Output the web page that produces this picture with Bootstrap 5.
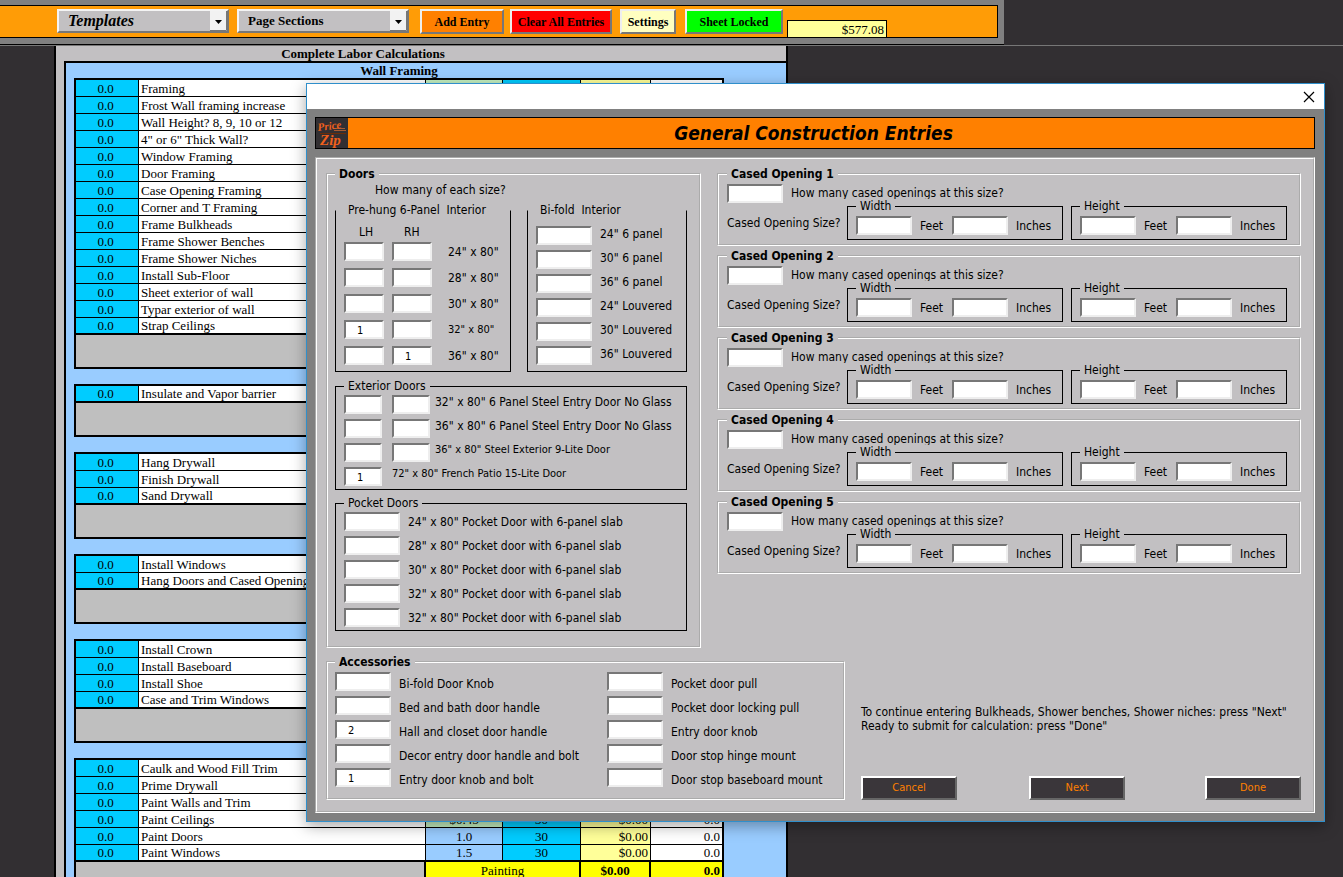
<!DOCTYPE html>
<html lang="en">
<head>
<meta charset="utf-8">
<meta name="viewport" content="width=device-width, initial-scale=1">
<title>General Construction Entries</title>
<link href="https://cdn.jsdelivr.net/npm/bootstrap@5.3.0/dist/css/bootstrap.min.css" rel="stylesheet">
<style>
  :root { --ink:#000; --panel:#c2c0c2; --frame:#808080; --orange:#ff8000; --cyan:#00ccff; --sky:#99ccff; --butter:#ffff99; }
  body { background:#322f32; color:var(--ink); font:13px/16px "Liberation Serif", serif; height:100vh; overflow:hidden; position:relative; }

  /* toolbar */
  .ribbon { width:75%; min-width:1004px; max-width:1004px; background:var(--frame); border-bottom:1px solid #000; padding:5px 6px 6px 0; }
  .ribbon-line { border-bottom:1px solid #777; }
  .ribbon-in { background:#ff9c06; border:1px solid #000; border-left:0; height:33px; padding-left:57px; }
  .pick { position:relative; width:172px; height:24px; margin:3px 8px 0 0; }
  .pick select { appearance:none; width:100%; height:100%; background:var(--panel); border:2px solid; border-color:#f4f4f4 #777 #777 #f4f4f4; border-radius:0; padding:0 9px; font:bold 13px/18px "Liberation Serif", serif; color:#000; }
  .pick select.big { font-size:16px; font-style:italic; }
  .pick svg { position:absolute; right:2px; top:2px; pointer-events:none; }
  .tool { height:25px; margin-top:3px; border:2px solid; border-color:#eee #777 #777 #eee; border-radius:0; padding:0; font:bold 12px/22px "Liberation Serif", serif; color:#000; white-space:nowrap; }
  .tool-add { width:84px; margin-left:3px; background:#ff8000; }
  .tool-clear { width:102px; margin-left:6px; background:#f00; }
  .tool-set { width:56px; margin-left:8px; background:#ffffc0; }
  .tool-lock { width:98px; margin-left:9px; background:#0f0; }
  .total { width:100px; height:17px; border:1px solid #000; border-bottom:0; background:var(--butter); text-align:right; padding-right:2px; line-height:17px; }

  /* worksheet */
  .sheet { width:734px; margin-left:54px; background:var(--panel); border:solid #000; border-width:0 2px; padding-left:8px; height:calc(100vh - 46px); overflow:hidden; }
  .sheet-title { height:15px; line-height:16px; padding-right:124px; font-weight:bold; text-align:center; }
  .sheet-in { background:var(--sky); border:solid #000; border-width:2px 0 0 2px; padding:0 62px 0 8px; height:100%; overflow:hidden; }
  .sheet-in h2 { font:bold 13px/15px "Liberation Serif", serif; text-align:center; margin:0; height:15px; }
  .calc { width:100%; table-layout:fixed; border-collapse:separate; border-spacing:0; border:2px solid #000; border-bottom:0; margin-bottom:15px; }
  .calc col:nth-child(1) { width:63px; }
  .calc col:nth-child(2) { width:287px; }
  .calc col:nth-child(3) { width:77px; }
  .calc col:nth-child(4) { width:78px; }
  .calc col:nth-child(5) { width:70px; }
  .calc td { height:17px; padding:2px 2px 0; line-height:14px; border:0 solid #000; border-width:0 1px 1px 0; white-space:nowrap; overflow:hidden; background:#fff; }
  .calc td:last-child { border-right:0; text-align:right; }
  .calc td:nth-child(1) { background:var(--cyan); text-align:center; padding-right:5px; }
  .calc td:nth-child(3) { background:#c4efc0; text-align:center; }
  .calc td.rate { background:var(--sky); }
  .calc td:nth-child(4) { background:var(--cyan); text-align:center; }
  .calc td:nth-child(5) { background:var(--butter); text-align:right; }
  .calc tbody tr:last-child td { border-bottom-width:2px; padding-top:1px; }
  .calc tfoot td:nth-child(n) { height:34px; background:#ff0; border-bottom-width:2px; border-right-width:2px; text-align:center; vertical-align:top; font-weight:bold; }
  .calc tfoot td:nth-child(1) { background:#bfbfbf; }
  .calc tfoot td:nth-child(2) { font-weight:normal; }
  .calc tfoot td:last-child { border-right:0; text-align:right; }

  /* dialog */
  .dlg { position:absolute; left:306px; right:18px; top:83px; background:var(--frame); border:1px solid #2f8fcb; box-shadow:0 4px 14px rgba(0,0,0,.35); font:12px/14px "DejaVu Sans Condensed", "DejaVu Sans", sans-serif; white-space:nowrap; }
  .dlg-top { background:#fff; height:25px; }
  .dlg-top button { background:none; border:0; padding:0 9px; line-height:0; }
  .dlg-body { padding:8px 9px 8px 8px; }
  .dlg-head { background:var(--orange); border:1px solid #000; height:32px; margin-bottom:8px; }
  .dlg-head h1 { font:italic bold 19px/31px "DejaVu Sans Condensed", "DejaVu Sans", sans-serif; margin:0; padding-right:35px; text-align:center; }
  .face { background:var(--panel); border:2px groove #fff; padding:8px 12px 11px 9px; }
  .dlg fieldset { border:1px solid #000; padding:2px 8px 3px; }
  .dlg fieldset.etched { border:2px groove #fff; }
  .dlg legend { float:none; width:auto; margin:0; padding:0 4px; font:inherit; height:14px; line-height:14px; white-space:pre; }
  .dlg .etched > legend { font-weight:bold; }
  .dlg fieldset.open-top { border-top-color:transparent; }
  .dlg .doors { width:375px; padding:0 12px 15px 7px; }
  .ask { margin:1px 0 4px 40px; line-height:17px; }
  .dlg .prehung { width:176px; padding:8px 8px 6px; }
  .dlg .bifold { width:160px; padding:9px 8px 6px; }
  .bifold label { padding-bottom:3px; }
  .dlg .exterior { margin-top:7px; }
  .exterior label { align-self:flex-start; }
  .dlg .pocket { margin-top:6px; }
  .hand { height:14px; margin-bottom:3px; padding-left:15px; }
  .hand span { width:45px; }
  .rows5 { display:flex; flex-direction:column; gap:5px; }
  .rows7 { display:flex; flex-direction:column; gap:7px; }
  .dlg input { width:56px; height:19px; flex:none; background:#fff; border:2px solid; border-color:#777 #eee #eee #777; border-radius:0; padding:2px 0 0 11px; font:11px/13px "DejaVu Sans Condensed", sans-serif; color:#000; margin-right:8px; }
  .dlg input:focus { outline:0; }
  .dlg input.w40 { width:40px; }
  .dlg input.w37 { width:38px; margin-right:10px; }
  .dlg input.w37 + label { margin-left:-5px; }
  .dlg input.w37 + label.far { margin-left:0; }
  .dlg input.w40 + label { margin-left:8px; }
  .fine { font-size:11px; }
  .dlg .acc { width:519px; padding:3px 7px 11px; }
  .acc label { padding-top:5px; }
  .acc-col { width:272px; }
  .dlg .cased { padding:3px 12px 4px 8px; }
  .cased-list { row-gap:3px; }
  .count { height:15px; }
  .count label { height:15px; line-height:19px; overflow:hidden; }
  .ask-size { width:120px; padding-top:6px; }
  .dlg .cased fieldset { padding:3px 0 4px 8px; flex:1 1 0; }
  .feet { width:32px; }
  .lower { margin-top:7px; }
  .note { margin-bottom:43px; }
  .act { width:96px; height:24px; border:2px solid; border-color:#fff #666 #666 #fff; border-radius:0; background:#3a363a; color:var(--orange); font:11px/20px "DejaVu Sans Condensed", sans-serif; padding:0; }
  .act-next { margin-left:72px; }
</style>
</head>
<body>
<header class="ribbon-line">
  <div class="ribbon">
    <div class="ribbon-in d-flex align-items-start">
      <div class="pick"><select class="big" aria-label="Templates"><option>Templates</option></select>
        <svg width="17" height="20"><path d="M0 0h17v20H0z" fill="#f2f2f2"/><path d="M16.500 0v19.500H0" fill="none" stroke="#777"/><path d="M5 9h7l-3.500 4z"/></svg></div>
      <div class="pick"><select aria-label="Page Sections"><option>Page Sections</option></select>
        <svg width="17" height="20"><path d="M0 0h17v20H0z" fill="#f2f2f2"/><path d="M16.500 0v19.500H0" fill="none" stroke="#777"/><path d="M5 9h7l-3.500 4z"/></svg></div>
      <button type="button" class="tool tool-add">Add Entry</button>
      <button type="button" class="tool tool-clear">Clear All Entries</button>
      <button type="button" class="tool tool-set">Settings</button>
      <button type="button" class="tool tool-lock">Sheet Locked</button>
      <output class="total align-self-end ms-1">$577.08</output>
    </div>
  </div>
</header>

<main class="sheet">
  <div class="sheet-title">Complete Labor Calculations</div>
  <div class="sheet-in">
    <h2>Wall Framing</h2>
    <table class="calc">
      <colgroup><col><col><col><col><col><col></colgroup>
      <tbody>
      <tr><td>0.0</td><td>Framing</td><td></td><td></td><td></td><td></td></tr>
      <tr><td>0.0</td><td>Frost Wall framing increase</td><td></td><td></td><td></td><td></td></tr>
      <tr><td>0.0</td><td>Wall Height? 8, 9, 10 or 12</td><td></td><td></td><td></td><td></td></tr>
      <tr><td>0.0</td><td>4" or 6" Thick Wall?</td><td></td><td></td><td></td><td></td></tr>
      <tr><td>0.0</td><td>Window Framing</td><td></td><td></td><td></td><td></td></tr>
      <tr><td>0.0</td><td>Door Framing</td><td></td><td></td><td></td><td></td></tr>
      <tr><td>0.0</td><td>Case Opening Framing</td><td></td><td></td><td></td><td></td></tr>
      <tr><td>0.0</td><td>Corner and T Framing</td><td></td><td></td><td></td><td></td></tr>
      <tr><td>0.0</td><td>Frame Bulkheads</td><td></td><td></td><td></td><td></td></tr>
      <tr><td>0.0</td><td>Frame Shower Benches</td><td></td><td></td><td></td><td></td></tr>
      <tr><td>0.0</td><td>Frame Shower Niches</td><td></td><td></td><td></td><td></td></tr>
      <tr><td>0.0</td><td>Install Sub-Floor</td><td></td><td></td><td></td><td></td></tr>
      <tr><td>0.0</td><td>Sheet exterior of wall</td><td></td><td></td><td></td><td></td></tr>
      <tr><td>0.0</td><td>Typar exterior of wall</td><td></td><td></td><td></td><td></td></tr>
      <tr><td>0.0</td><td>Strap Ceilings</td><td></td><td></td><td></td><td></td></tr>
      </tbody>
      <tfoot><tr><td colspan="2"></td><td colspan="2"></td><td></td><td></td></tr></tfoot>
    </table>
    <table class="calc">
      <colgroup><col><col><col><col><col><col></colgroup>
      <tbody><tr><td>0.0</td><td>Insulate and Vapor barrier</td><td></td><td></td><td></td><td></td></tr></tbody>
      <tfoot><tr><td colspan="2"></td><td colspan="2"></td><td></td><td></td></tr></tfoot>
    </table>
    <table class="calc">
      <colgroup><col><col><col><col><col><col></colgroup>
      <tbody>
      <tr><td>0.0</td><td>Hang Drywall</td><td></td><td></td><td></td><td></td></tr>
      <tr><td>0.0</td><td>Finish Drywall</td><td></td><td></td><td></td><td></td></tr>
      <tr><td>0.0</td><td>Sand Drywall</td><td></td><td></td><td></td><td></td></tr>
      </tbody>
      <tfoot><tr><td colspan="2"></td><td colspan="2"></td><td></td><td></td></tr></tfoot>
    </table>
    <table class="calc">
      <colgroup><col><col><col><col><col><col></colgroup>
      <tbody>
      <tr><td>0.0</td><td>Install Windows</td><td></td><td></td><td></td><td></td></tr>
      <tr><td>0.0</td><td>Hang Doors and Cased Openings</td><td></td><td></td><td></td><td></td></tr>
      </tbody>
      <tfoot><tr><td colspan="2"></td><td colspan="2"></td><td></td><td></td></tr></tfoot>
    </table>
    <table class="calc">
      <colgroup><col><col><col><col><col><col></colgroup>
      <tbody>
      <tr><td>0.0</td><td>Install Crown</td><td></td><td></td><td></td><td></td></tr>
      <tr><td>0.0</td><td>Install Baseboard</td><td></td><td></td><td></td><td></td></tr>
      <tr><td>0.0</td><td>Install Shoe</td><td></td><td></td><td></td><td></td></tr>
      <tr><td>0.0</td><td>Case and Trim Windows</td><td></td><td></td><td></td><td></td></tr>
      </tbody>
      <tfoot><tr><td colspan="2"></td><td colspan="2"></td><td></td><td></td></tr></tfoot>
    </table>
    <table class="calc">
      <colgroup><col><col><col><col><col><col></colgroup>
      <tbody>
      <tr><td>0.0</td><td>Caulk and Wood Fill Trim</td><td></td><td></td><td></td><td></td></tr>
      <tr><td>0.0</td><td>Prime Drywall</td><td></td><td></td><td></td><td></td></tr>
      <tr><td>0.0</td><td>Paint Walls and Trim</td><td></td><td></td><td></td><td></td></tr>
      <tr><td>0.0</td><td>Paint Ceilings</td><td>$0.45</td><td>30</td><td>$0.00</td><td>0.0</td></tr>
      <tr><td>0.0</td><td>Paint Doors</td><td class="rate">1.0</td><td>30</td><td>$0.00</td><td>0.0</td></tr>
      <tr><td>0.0</td><td>Paint Windows</td><td class="rate">1.5</td><td>30</td><td>$0.00</td><td>0.0</td></tr>
      </tbody>
      <tfoot><tr><td colspan="2"></td><td colspan="2">Painting</td><td>$0.00</td><td>0.0</td></tr></tfoot>
    </table>
  </div>
</main>

<section class="dlg" role="dialog" aria-labelledby="dlgTitle">
  <div class="dlg-top d-flex justify-content-end align-items-center">
    <button type="button" aria-label="Close"><svg width="12" height="12" stroke="#000" stroke-width="1.200"><path d="M1 1l10 10M11 1L1 11"/></svg></button>
  </div>
  <div class="dlg-body">
    <div class="dlg-head d-flex">
      <svg width="32" height="30" role="img" aria-label="Price Zip"><path d="M0 0h32v30H0z" fill="#322f32"/>
        <path d="M17 10.500h12M18 12.500h12" stroke="#a85c34"/><path d="M4 15.500h26" stroke="#6a2c08"/>
        <g fill="#f0601c" font-family="Liberation Serif, serif" font-style="italic" font-weight="bold"><text x="2" y="13" font-size="11" transform="rotate(-7 2 13)">Price</text><text x="4" y="27" font-size="15">Zip</text></g></svg>
      <h1 id="dlgTitle" class="flex-fill">General Construction Entries</h1>
    </div>
    <form class="face">
      <div class="d-flex gap-3 align-items-start">
        <fieldset class="etched doors"><legend>Doors</legend>
          <p class="ask">How many of each size?</p>
          <div class="d-flex gap-3">
            <fieldset class="open-top prehung"><legend>Pre-hung 6-Panel  Interior</legend>
              <div class="hand d-flex"><span>LH</span><span>RH</span></div>
              <div class="rows7">
                <div class="d-flex align-items-center"><input class="w40" aria-label="LH 24"><input class="w40" id="p24"><label for="p24">24" x 80"</label></div>
                <div class="d-flex align-items-center"><input class="w40" aria-label="LH 28"><input class="w40" id="p28"><label for="p28">28" x 80"</label></div>
                <div class="d-flex align-items-center"><input class="w40" aria-label="LH 30"><input class="w40" id="p30"><label for="p30">30" x 80"</label></div>
                <div class="d-flex align-items-center"><input class="w40" aria-label="LH 32" value="1"><input class="w40" id="p32"><label class="fine" for="p32">32" x 80"</label></div>
                <div class="d-flex align-items-center"><input class="w40" aria-label="LH 36"><input class="w40" id="p36" value="1"><label for="p36">36" x 80"</label></div>
              </div>
            </fieldset>
            <fieldset class="open-top bifold"><legend>Bi-fold  Interior</legend>
              <div class="rows5">
                <div class="d-flex align-items-center"><input id="b1"><label for="b1">24" 6 panel</label></div>
                <div class="d-flex align-items-center"><input id="b2"><label for="b2">30" 6 panel</label></div>
                <div class="d-flex align-items-center"><input id="b3"><label for="b3">36" 6 panel</label></div>
                <div class="d-flex align-items-center"><input id="b4"><label for="b4">24" Louvered</label></div>
                <div class="d-flex align-items-center"><input id="b5"><label for="b5">30" Louvered</label></div>
                <div class="d-flex align-items-center"><input id="b6"><label for="b6">36" Louvered</label></div>
              </div>
            </fieldset>
          </div>
          <fieldset class="exterior"><legend>Exterior Doors</legend>
            <div class="rows5">
              <div class="d-flex align-items-center"><input class="w37" aria-label="LH 32 steel"><input class="w37" id="e1"><label for="e1">32" x 80" 6 Panel Steel Entry Door No Glass</label></div>
              <div class="d-flex align-items-center"><input class="w37" aria-label="LH 36 steel"><input class="w37" id="e2"><label for="e2">36" x 80" 6 Panel Steel Entry Door No Glass</label></div>
              <div class="d-flex align-items-center"><input class="w37" aria-label="LH 9-Lite"><input class="w37" id="e3"><label class="fine" for="e3">36" x 80" Steel Exterior 9-Lite Door</label></div>
              <div class="d-flex align-items-center"><input class="w37" id="e4" value="1"><label class="fine far" for="e4">72" x 80" French Patio 15-Lite Door</label></div>
            </div>
          </fieldset>
          <fieldset class="pocket"><legend>Pocket Doors</legend>
            <div class="rows5">
              <div class="d-flex align-items-center"><input id="k1"><label for="k1">24" x 80" Pocket Door with 6-panel slab</label></div>
              <div class="d-flex align-items-center"><input id="k2"><label for="k2">28" x 80" Pocket door with 6-panel slab</label></div>
              <div class="d-flex align-items-center"><input id="k3"><label for="k3">30" x 80" Pocket door with 6-panel slab</label></div>
              <div class="d-flex align-items-center"><input id="k4"><label for="k4">32" x 80" Pocket door with 6-panel slab</label></div>
              <div class="d-flex align-items-center"><input id="k5"><label for="k5">32" x 80" Pocket door with 6-panel slab</label></div>
            </div>
          </fieldset>
        </fieldset>

        <div class="cased-list flex-fill d-grid">
          <fieldset class="etched cased"><legend>Cased Opening 1</legend>
            <div class="count d-flex align-items-start"><input id="c1"><label for="c1">How many cased openings at this size?</label></div>
            <div class="d-flex align-items-center"><span class="ask-size">Cased Opening Size?</span>
              <fieldset><legend>Width</legend><div class="d-flex align-items-center"><input id="w1f"><label class="feet" for="w1f">Feet</label><input id="w1i"><label for="w1i">Inches</label></div></fieldset>
              <fieldset class="ms-2"><legend>Height</legend><div class="d-flex align-items-center"><input id="h1f"><label class="feet" for="h1f">Feet</label><input id="h1i"><label for="h1i">Inches</label></div></fieldset>
            </div>
          </fieldset>
          <fieldset class="etched cased"><legend>Cased Opening 2</legend>
            <div class="count d-flex align-items-start"><input id="c2"><label for="c2">How many cased openings at this size?</label></div>
            <div class="d-flex align-items-center"><span class="ask-size">Cased Opening Size?</span>
              <fieldset><legend>Width</legend><div class="d-flex align-items-center"><input id="w2f"><label class="feet" for="w2f">Feet</label><input id="w2i"><label for="w2i">Inches</label></div></fieldset>
              <fieldset class="ms-2"><legend>Height</legend><div class="d-flex align-items-center"><input id="h2f"><label class="feet" for="h2f">Feet</label><input id="h2i"><label for="h2i">Inches</label></div></fieldset>
            </div>
          </fieldset>
          <fieldset class="etched cased"><legend>Cased Opening 3</legend>
            <div class="count d-flex align-items-start"><input id="c3"><label for="c3">How many cased openings at this size?</label></div>
            <div class="d-flex align-items-center"><span class="ask-size">Cased Opening Size?</span>
              <fieldset><legend>Width</legend><div class="d-flex align-items-center"><input id="w3f"><label class="feet" for="w3f">Feet</label><input id="w3i"><label for="w3i">Inches</label></div></fieldset>
              <fieldset class="ms-2"><legend>Height</legend><div class="d-flex align-items-center"><input id="h3f"><label class="feet" for="h3f">Feet</label><input id="h3i"><label for="h3i">Inches</label></div></fieldset>
            </div>
          </fieldset>
          <fieldset class="etched cased"><legend>Cased Opening 4</legend>
            <div class="count d-flex align-items-start"><input id="c4"><label for="c4">How many cased openings at this size?</label></div>
            <div class="d-flex align-items-center"><span class="ask-size">Cased Opening Size?</span>
              <fieldset><legend>Width</legend><div class="d-flex align-items-center"><input id="w4f"><label class="feet" for="w4f">Feet</label><input id="w4i"><label for="w4i">Inches</label></div></fieldset>
              <fieldset class="ms-2"><legend>Height</legend><div class="d-flex align-items-center"><input id="h4f"><label class="feet" for="h4f">Feet</label><input id="h4i"><label for="h4i">Inches</label></div></fieldset>
            </div>
          </fieldset>
          <fieldset class="etched cased"><legend>Cased Opening 5</legend>
            <div class="count d-flex align-items-start"><input id="c5"><label for="c5">How many cased openings at this size?</label></div>
            <div class="d-flex align-items-center"><span class="ask-size">Cased Opening Size?</span>
              <fieldset><legend>Width</legend><div class="d-flex align-items-center"><input id="w5f"><label class="feet" for="w5f">Feet</label><input id="w5i"><label for="w5i">Inches</label></div></fieldset>
              <fieldset class="ms-2"><legend>Height</legend><div class="d-flex align-items-center"><input id="h5f"><label class="feet" for="h5f">Feet</label><input id="h5i"><label for="h5i">Inches</label></div></fieldset>
            </div>
          </fieldset>
        </div>
      </div>

      <div class="lower d-flex gap-3">
        <fieldset class="etched acc"><legend>Accessories</legend>
          <div class="d-flex">
            <div class="acc-col rows5">
              <div class="d-flex align-items-center"><input id="a1"><label for="a1">Bi-fold Door Knob</label></div>
              <div class="d-flex align-items-center"><input id="a2"><label for="a2">Bed and bath door handle</label></div>
              <div class="d-flex align-items-center"><input id="a3" value="2"><label for="a3">Hall and closet door handle</label></div>
              <div class="d-flex align-items-center"><input id="a4"><label for="a4">Decor entry door handle and bolt</label></div>
              <div class="d-flex align-items-center"><input id="a5" value="1" autofocus><label for="a5">Entry door knob and bolt</label></div>
            </div>
            <div class="rows5">
              <div class="d-flex align-items-center"><input id="a6"><label for="a6">Pocket door pull</label></div>
              <div class="d-flex align-items-center"><input id="a7"><label for="a7">Pocket door locking pull</label></div>
              <div class="d-flex align-items-center"><input id="a8"><label for="a8">Entry door knob</label></div>
              <div class="d-flex align-items-center"><input id="a9"><label for="a9">Door stop hinge mount</label></div>
              <div class="d-flex align-items-center"><input id="a10"><label for="a10">Door stop baseboard mount</label></div>
            </div>
          </div>
        </fieldset>
        <div class="flex-fill d-flex flex-column justify-content-end">
          <p class="note">To continue entering Bulkheads, Shower benches, Shower niches: press "Next"<br>Ready to submit for calculation: press "Done"</p>
          <div class="d-flex pb-0">
            <button type="button" class="act">Cancel</button>
            <button type="button" class="act act-next">Next</button>
            <button type="button" class="act ms-auto">Done</button>
          </div>
        </div>
      </div>
    </form>
  </div>
</section>
<script src="https://cdn.jsdelivr.net/npm/bootstrap@5.3.0/dist/js/bootstrap.bundle.min.js"></script>
</body>
</html>
